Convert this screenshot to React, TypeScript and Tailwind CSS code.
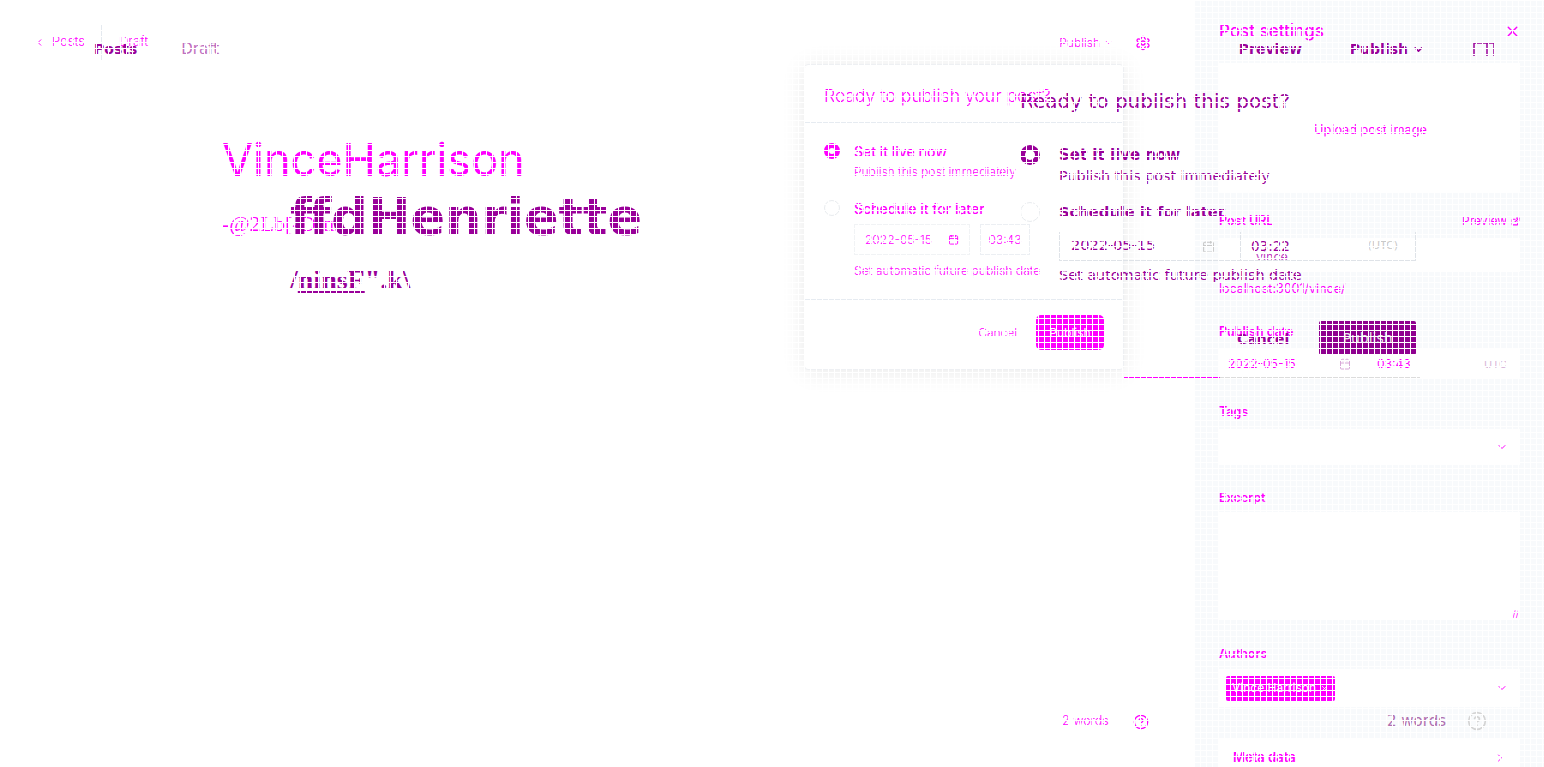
import React from 'react';
import { Calendar, ChevronDown, ChevronLeft, ChevronRight, CircleHelp, ExternalLink, Settings, X } from 'lucide-react';

function Radio({ on, size }: { on: boolean; size: 'sm' | 'lg' }) {
  const box = size === 'sm' ? 'w-4 h-4' : 'w-5 h-5';
  const tone = size === 'sm' ? 'border-[#ff00ff]' : 'border-[#990099]';
  if (!on) return <span className={`${box} rounded-full border border-[#e9ecef] shrink-0`} />;
  return (
    <span className={`${box} ${tone} rounded-full border-[5px] bg-white shrink-0`} />
  );
}

function FieldLabel({ children }: { children: React.ReactNode }) {
  return <div className="text-[12.5px] font-semibold leading-[16px] text-[#ff00ff]">{children}</div>;
}

function SettingsPanel() {
  return (
    <aside className="w-[350px] shrink-0 h-full overflow-hidden bg-[#f8fafc] pl-[25px] pr-[24px]">
      <div className="flex items-center justify-between h-[63px] pt-[1px]">
        <span className="text-[17px] font-medium text-[#ff00ff]">Post settings</span>
        <X size={17} className="text-[#ff00ff] mr-[-1px] mb-[2px]" />
      </div>
      <div className="h-[129px] bg-white flex items-center justify-center">
        <span className="text-[12.7px] px-3 py-2 text-[#ff00ff] mt-[4px] ml-[2px]">Upload post image</span>
      </div>

      <div className="mt-[20px] flex items-center justify-between">
        <FieldLabel>Post URL</FieldLabel>
        <span className="flex items-center gap-1 text-[12px] text-[#ff00ff]">Preview <ExternalLink size={9} strokeWidth={3} /></span>
      </div>
      <div className="mt-[8px] h-[34px] bg-white flex items-center pl-[37px] pt-[4px] text-[12.5px] text-[#c040c0]">vince</div>
      <div className="mt-[9px] text-[12.5px] leading-[16px] text-[#ff00ff]">localhost:3001/vince/</div>

      <div className="mt-[27px]"><FieldLabel>Publish date</FieldLabel></div>
      <div className="mt-[9px] h-[30px] bg-white flex items-center text-[12px] text-[#ff00ff]">
        <span className="pl-[9px] w-[120px]">2022-05-15</span>
        <Calendar size={12} className="text-[#d8a8d8]" />
        <span className="pl-[26px] w-[125px]">03:43</span>
        <span className="pl-[8px] text-[11px] text-[#d9b8d9]">UTC</span>
      </div>

      <div className="mt-[25px]"><FieldLabel>Tags</FieldLabel></div>
      <div className="mt-[9px] h-[36px] bg-white flex items-center justify-end pr-[12px]">
        <ChevronDown size={12} className="text-[#ff00ff]" />
      </div>

      <div className="mt-[25px]"><FieldLabel>Excerpt</FieldLabel></div>
      <div className="mt-[6px] h-[108px] bg-white flex items-end justify-end">
        <span className="text-[9px] leading-[10px] text-[#ff00ff] pr-[1px] pb-[1px]">//</span>
      </div>

      <div className="mt-[26px]"><FieldLabel>Authors</FieldLabel></div>
      <div className="mt-[7px] h-[38px] bg-white flex items-center justify-between pl-[7px] pr-[12px]">
        <span className="w-[109px] h-[25px] rounded-[2px] bg-[#ff00ff] text-white text-[12px] flex items-center justify-between px-[6px]">
          Vince Harrison <X size={9} />
        </span>
        <ChevronDown size={12} className="text-[#ff00ff]" />
      </div>

      <div className="mt-[32px] h-[60px] bg-white flex items-start justify-between pl-[14px] pr-[14px] pt-[9px]">
        <span className="text-[13px] font-semibold text-[#ff00ff]">Meta data</span>
        <ChevronRight size={12} className="text-[#ff00ff] mt-[4px]" />
      </div>
    </aside>
  );
}

function PublishCardSmall() {
  return (
    <div className="absolute left-[804px] top-[64px] w-[320px] h-[306px] bg-white rounded-[4px] border border-[#eef0f3] shadow-[0_2px_24px_rgba(0,0,0,0.09)] flex flex-col text-[#ff00ff]">
      <div className="h-[58px] shrink-0 border-b border-[#e6ebf1] px-[19px] pt-[20px] text-[17.6px] font-light leading-[22px]">Ready to publish your post?</div>
      <div className="h-[177px] shrink-0 border-b border-[#e6ebf1] pl-[19px] pt-[20px]">
        <div className="flex gap-[14px]">
          <Radio on size="sm" />
          <div>
            <div className="text-[14px] font-medium leading-[17px]">Set it live now</div>
            <div className="text-[12px] font-light leading-[16px] mt-[4px]">Publish this post immediately</div>
          </div>
        </div>
        <div className="flex gap-[14px] mt-[20px]">
          <Radio on={false} size="sm" />
          <div>
            <div className="text-[14px] font-medium leading-[17px]">Schedule it for later</div>
            <div className="mt-[7px] flex gap-[10px] text-[12px] font-light leading-[16px]">
              <div className="w-[116px] h-[31px] border border-[#f1f3f5] flex items-center justify-between pl-[10px] pr-[10px]">
                2022-05-15 <Calendar size={11} />
              </div>
              <div className="w-[50px] h-[31px] border border-[#eceff3] flex items-center justify-center">03:43</div>
            </div>
            <div className="text-[12.2px] font-light leading-[16px] mt-[8px] whitespace-nowrap">Set automatic future publish date</div>
          </div>
        </div>
      </div>
      <div className="flex-1 flex items-center justify-end gap-[19px] pr-[19px] pb-[4px]">
        <span className="text-[12px] font-light">Cancel</span>
        <span className="w-[68px] h-[35px] rounded-[5px] bg-[#ff00ff] text-white text-[12px] flex items-center justify-center">Publish</span>
      </div>
    </div>
  );
}

// first (smaller) version of the editor, sits under everything else
function BaseLayer() {
  return (
    <div className="absolute inset-0 flex font-['Inter',sans-serif]">
      <main className="flex-1 flex flex-col h-full text-[#ff00ff]">
        <header className="h-[84px] flex items-center justify-between pl-[34px] pr-[43px]">
          <div className="flex items-center text-[13px] font-light">
            <ChevronLeft size={11} />
            <span className="ml-[7px]">Posts</span>
            <span className="ml-[34px]">Draft</span>
          </div>
          <div className="flex items-center text-[12px] font-light mt-[1px]">
            <span className="flex items-center gap-1">Publish <ChevronDown size={9} /></span>
            <Settings size={16} className="ml-[22px]" />
          </div>
        </header>
        <div className="pl-[222px] pt-[48px] text-[45px] font-normal leading-[56px]">VinceHarrison</div>
        <div className="pl-[222px] pt-[24px] text-[22px] leading-[24px] font-['Liberation_Serif',serif]">-@2Lb[-D]m</div>
        <div className="mt-auto mb-[36px] flex items-center pl-[1062px] text-[12.5px] font-light">
          <span>2 words</span>
          <CircleHelp size={16} className="ml-[24px]" />
        </div>
      </main>
      <SettingsPanel />
      <PublishCardSmall />
      <div className="absolute left-[101px] top-[25px] h-[35px] w-px bg-[#e4e9ef]" />
    </div>
  );
}

// second (wider, heavier) version drawn on top, no backgrounds of its own
function TopLayer() {
  return (
    <div className="absolute inset-0 font-['DejaVu_Sans',sans-serif] text-[#990099]">
      <header className="h-[98px] flex items-center justify-between pl-[94px] pr-[49px]">
        <div className="flex items-center text-[15px]">
          <span className="font-bold text-[14px]">Posts</span>
          <span className="ml-[44px] text-[#c070c0]">Draft</span>
        </div>
        <div className="flex items-center text-[14px] font-bold">
          <span>Preview</span>
          <span className="ml-[48px] flex items-center gap-1">Publish <ChevronDown size={13} strokeWidth={3} /></span>
          <svg width="22" height="14" viewBox="0 0 22 14" fill="none" stroke="currentColor" strokeWidth="1.5" className="ml-[48px]">
            <path d="M1 14V1H21V14M14 1V14" />
          </svg>
        </div>
      </header>
      <div className="pl-[290px] pt-[90px] text-[51px] font-bold leading-[60px]">ffdHenriette</div>
      <div className="pl-[290px] pt-[17px] text-[28px] font-bold leading-[30px] font-['Liberation_Serif',serif]">
        /<span className="underline">ninsF</span>".k\
      </div>

      <div className="absolute left-[1020px] top-[90px] w-[396px]">
        <div className="text-[20px] leading-[22px] whitespace-nowrap">Ready to publish this post?</div>
        <div className="flex items-center gap-[19px] mt-[33px] h-[20px] text-[15px] font-bold whitespace-nowrap">
          <Radio on size="lg" />
          Set it live now
        </div>
        <div className="ml-[39px] mt-[2px] text-[14.3px] leading-[18px] whitespace-nowrap">Publish this post immediately</div>
        <div className="flex items-center gap-[19px] mt-[17px] h-[20px] text-[14.7px] font-bold whitespace-nowrap">
          <Radio on={false} size="lg" />
          Schedule it for later
        </div>
        <div className="ml-[39px] mt-[10px] h-[29px] w-[357px] flex border border-t-0 border-[#dfe3e8] text-[14.5px]">
          <div className="w-[181px] flex items-center justify-between pl-[11px] pr-[25px] border-r border-[#dfe3e8]">
            2022-05-15 <Calendar size={13} className="text-[#c8c8c8]" />
          </div>
          <div className="flex-1 flex items-center justify-between pl-[10px] pr-[17px]">
            <span className="text-[13.5px]">03:22</span> <span className="text-[11px] text-[#c9c9c9]">(UTC)</span>
          </div>
        </div>
        <div className="ml-[39px] mt-[5px] text-[14.4px] leading-[18px] whitespace-nowrap">Set automatic future publish date</div>
        <div className="ml-[217px] mt-[37px] flex items-center gap-[30px]">
          <span className="text-[14px] font-bold pt-[3px]">Cancel</span>
          <span className="w-[97px] h-[34px] rounded-[2px] bg-[#8f008f] text-[#e8e8e8] text-[14px] flex items-center justify-center">Publish</span>
        </div>
      </div>
      <div className="absolute left-[1124px] top-[377px] flex">
        <span className="w-[96px] h-px bg-[#ff00ff]" />
        <span className="w-[200px] h-px bg-[#dcdcdc]" />
      </div>

      <div className="absolute left-[1387px] top-[710px] flex items-center text-[15px] text-[#b070b0]">
        <span>2 words</span>
        <CircleHelp size={20} className="ml-[21px] text-[#d4d4d4]" />
      </div>
    </div>
  );
}

export default function App() {
  return (
    <div className="relative w-[1544px] h-[767px] overflow-hidden bg-white">
      <BaseLayer />
      <TopLayer />
      {/* 6px white lattice over the whole shot */}
      <div className="absolute inset-0 pointer-events-none bg-[linear-gradient(to_right,#ffffff_1px,transparent_1px),linear-gradient(to_bottom,#ffffff_1px,transparent_1px)] bg-[size:6px_6px]" />
    </div>
  );
}
